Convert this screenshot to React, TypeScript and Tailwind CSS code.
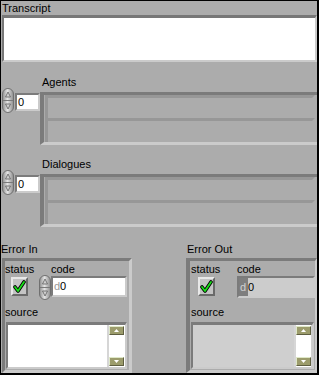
import React from 'react';

const Spinner = () => (
  <svg width="12" height="25" viewBox="0 0 12 25" className="block shrink-0">
    <defs>
      <linearGradient id="spin" x1="0" x2="1" y1="0" y2="0">
        <stop offset="0" stopColor="#8c8c8c" />
        <stop offset="0.45" stopColor="#e4e4e4" />
        <stop offset="1" stopColor="#8c8c8c" />
      </linearGradient>
    </defs>
    <rect x="0.5" y="0.5" width="11" height="24" rx="5.5" fill="url(#spin)" stroke="#707070" />
    <line x1="1" y1="12.5" x2="11" y2="12.5" stroke="#7a7a7a" />
    <path d="M6 4 L8.5 9 L3.5 9 Z" fill="#d0d0d0" stroke="#5e5e5e" strokeWidth="0.8" />
    <path d="M6 21 L8.5 16 L3.5 16 Z" fill="#d0d0d0" stroke="#5e5e5e" strokeWidth="0.8" />
  </svg>
);

const NumBox = () => (
  <div className="w-[25px] h-[18px] ml-[1px] mt-[5px] border-t-2 border-l-2 border-t-[#7b7b7b] border-l-[#7b7b7b] border-b-2 border-r-2 border-b-[#cbcbcb] border-r-[#cbcbcb] bg-white pl-[1px] leading-[14px]">
    0
  </div>
);

const ArrayFrame = () => (
  <div className="w-[277px] h-[53px] mt-[4px] border-t-[3px] border-l-[4px] border-t-[#7b7b7b] border-l-[#7b7b7b] border-b-[3px] border-b-[#cbcbcb] pl-[1px] flex flex-col">
    <div className="w-[270px] h-[23px] border-t-[3px] border-l-[3px] border-r-[3px] border-t-[#979797] border-l-[#979797] border-r-[#acacac]" />
    <div className="w-[270px] h-[24px] border-t-[3px] border-l-[3px] border-r-[3px] border-t-[#979797] border-l-[#979797] border-r-[#acacac]" />
  </div>
);

const ArrayBlock = ({ label, mt }: { label: string; mt: string }) => (
  <div className={mt}>
    <div className="h-[13px] ml-[41px]">{label}</div>
    <div className="flex items-start -mt-[1px] ml-[1px]">
      <Spinner />
      <NumBox />
      <ArrayFrame />
    </div>
  </div>
);

const Check = () => (
  <svg width="13" height="13" viewBox="0 0 13 13" className="block">
    <path d="M2 7 L5 11 L11 2" fill="none" stroke="#000" strokeWidth="3.6" strokeLinejoin="round" strokeLinecap="round" />
    <path d="M2 7 L5 11 L11 2" fill="none" stroke="#18e018" strokeWidth="1.8" strokeLinejoin="round" strokeLinecap="round" />
  </svg>
);

const Led = () => (
  <div className="w-[17px] h-[19px] border-t-2 border-l-2 border-t-[#e8e8e8] border-l-[#e8e8e8] border-b-2 border-r-2 border-b-[#6a6a6a] border-r-[#6a6a6a] bg-[#c4c4c4] flex items-center justify-center">
    <Check />
  </div>
);

const ScrollBtn = ({ down }: { down?: boolean }) => (
  <div className="w-[15px] h-[9px] bg-[#9c9c6c] border border-t-[#dfe8c8] border-l-[#dfe8c8] border-b-[#5f5f40] border-r-[#5f5f40] flex items-center justify-center">
    <svg width="5" height="3" viewBox="0 0 5 3" className="block">
      <path d={down ? 'M0 0 L5 0 L2.5 3 Z' : 'M0 3 L5 3 L2.5 0 Z'} fill="#fff" />
    </svg>
  </div>
);

const SourceBox = ({ w, bg, track }: { w: string; bg: string; track: string }) => (
  <div className={`${w} h-[47px] border-t-[3px] border-l-[2px] border-t-[#7b7b7b] border-l-[#7b7b7b] border-b-[2px] border-r-[2px] border-b-[#cbcbcb] border-r-[#cbcbcb] ${bg} flex justify-end pr-[1px]`}>
    <div className={`w-[17px] h-full ${track} border-l-2 border-l-[#d6d6d6] flex flex-col justify-between items-center py-[1px]`}>
      <ScrollBtn />
      <ScrollBtn down />
    </div>
  </div>
);

export default function App() {
  return (
    <div className="w-[319px] h-[375px] bg-[#acacac] border-t border-l border-r-2 border-b-2 border-black text-black text-[11px] leading-[13px] flex flex-col" style={{ fontFamily: '"Liberation Sans", Arial, sans-serif' }}>
      <div className="h-[14px] pt-[1px] ml-[1px]">Transcript</div>
      <div className="ml-[1px] w-[315px] h-[47px] border-t-[3px] border-l-[2px] border-t-[#777777] border-l-[#777777] border-b-[2px] border-r-[2px] border-b-[#cbcbcb] border-r-[#cbcbcb] bg-white" />

      <ArrayBlock label="Agents" mt="mt-[14px]" />
      <ArrayBlock label="Dialogues" mt="mt-[13px]" />

      <div className="flex mt-[16px] flex-1">
        <div className="ml-[0px] w-[131px] flex flex-col">
          <div className="h-[13px]">Error In</div>
          <div className="mt-[2px] ml-[1px] flex-1 border-t-[3px] border-l-[3px] border-t-[#7b7b7b] border-l-[#7b7b7b] border-b-[3px] border-r-[3px] border-b-[#cbcbcb] border-r-[#cbcbcb] flex flex-col">
            <div className="flex h-[12px] mt-[2px]">
              <div className="w-[46px]">status</div>
              <div>code</div>
            </div>
            <div className="flex items-start h-[24px]">
              <div className="ml-[6px] mt-[2px]"><Led /></div>
              <div className="ml-[11px]"><Spinner /></div>
              <div className="w-[76px] h-[21px] mt-[1px] border-t-2 border-l-2 border-t-[#7b7b7b] border-l-[#7b7b7b] border-b-2 border-r-2 border-b-[#cbcbcb] border-r-[#cbcbcb] bg-white flex leading-[17px]">
                <span className="w-[7px] pl-[1px] text-[#9a9a9a]">d</span>
                <span>0</span>
              </div>
            </div>
            <div className="h-[13px] mt-[7px]">source</div>
            <div className="mt-[3px] ml-[1px]">
              <SourceBox w="w-[121px]" bg="bg-white" track="bg-white" />
            </div>
          </div>
        </div>

        <div className="ml-[54px] w-[131px] flex flex-col">
          <div className="h-[13px] ml-[1px]">Error Out</div>
          <div className="mt-[2px] flex-1 border-t-[3px] border-l-[4px] border-t-[#7b7b7b] border-l-[#7b7b7b] border-b-[3px] border-r-[2px] border-b-[#cbcbcb] border-r-[#cbcbcb] flex flex-col">
            <div className="flex h-[12px] mt-[2px] ml-[1px]">
              <div className="w-[46px]">status</div>
              <div>code</div>
            </div>
            <div className="flex items-start h-[24px]">
              <div className="ml-[8px] mt-[2px]"><Led /></div>
              <div className="ml-[22px] w-[79px] h-[22px] mt-[1px] border-t-2 border-l-2 border-t-[#7b7b7b] border-l-[#7b7b7b] border-b-2 border-r-2 border-b-[#cbcbcb] border-r-[#cbcbcb] bg-[#cccccc] flex leading-[18px]">
                <span className="w-[9px] pl-[1px] bg-[#7e7e7e] text-[#d0d0d0]">d</span>
                <span>0</span>
              </div>
            </div>
            <div className="h-[13px] mt-[7px] ml-[1px]">source</div>
            <div className="mt-[3px] ml-[1px]">
              <SourceBox w="w-[123px]" bg="bg-[#cfcfcf]" track="bg-white" />
            </div>
          </div>
        </div>
      </div>
    </div>
  );
}
